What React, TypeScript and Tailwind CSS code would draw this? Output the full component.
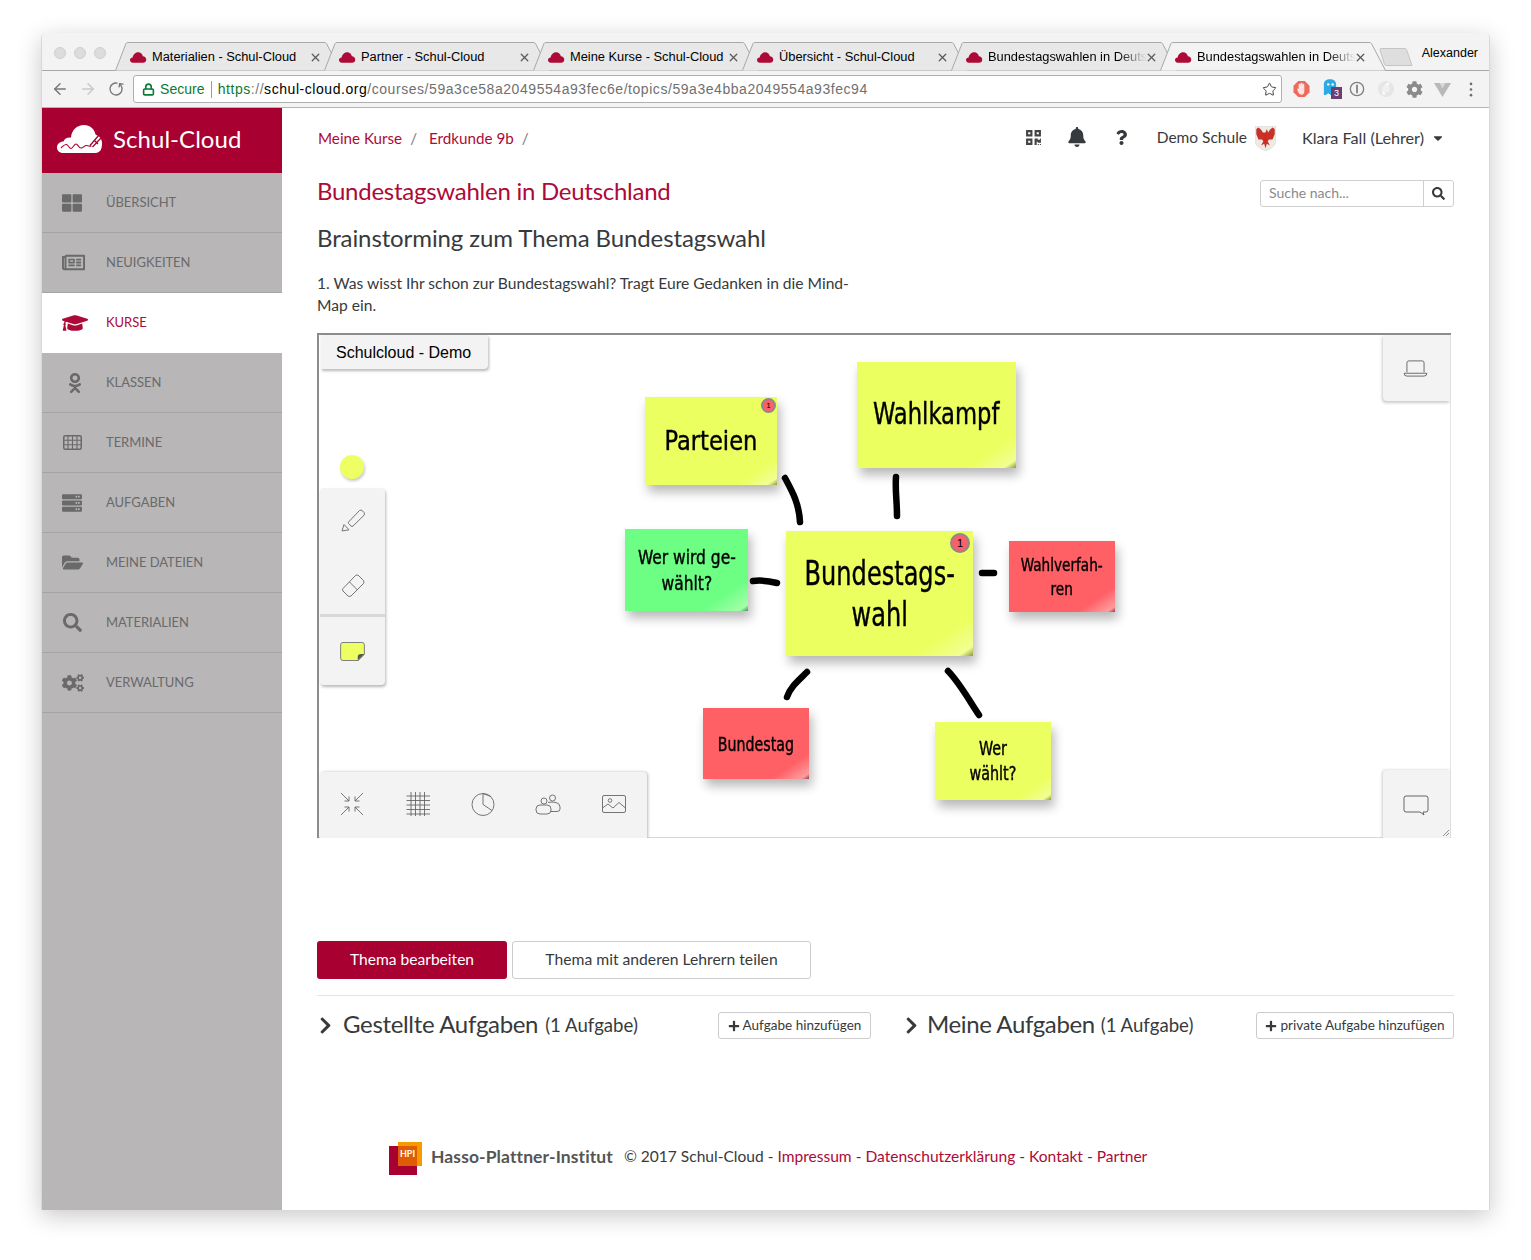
import React from "react";
import { ArrowLeft, ArrowRight, RotateCw, Lock, Star, X } from "lucide-react";
import {
  FaThLarge, FaRegNewspaper, FaGraduationCap, FaOdnoklassniki, FaServer,
  FaFolderOpen, FaSearch, FaCogs, FaBell, FaQuestion, FaQrcode, FaCaretDown, FaPlus, FaChevronRight, FaCog,
} from "react-icons/fa";

const TabCloud = () => (
  <svg viewBox="0 0 18 12" className="w-[17px] h-[12px] shrink-0">
    <path d="M3 12C1 12 0 10.600 0 9.200 0 7.600 1.200 6.400 2.800 6.400 3.200 3.800 5.400 1 8.600 1c2.800 0 4.600 2 5 4.200 2 .2 3.600 1.600 3.600 3.600 0 1.800-1.400 3.200-3.400 3.200z" fill="#ad0a37" />
  </svg>
);

function Tab({ title, active, fade }: { title: string; active?: boolean; fade?: boolean }) {
  return (
    <div className="relative h-[29px] w-[226px] -mr-[17px] shrink-0" style={{ zIndex: active ? 5 : 1 }}>
      <svg viewBox="0 0 226 29" className="absolute inset-0 w-full h-full">
        <path d="M0.500 28.500 L11 1.500 Q11.500 .5 13 .5 L209 .5 Q211 .5 211.500 1.500 L225.500 28.500" fill={active ? "#f3f3f3" : "#e8e8e8"} stroke="#a8a8a8" />
      </svg>
      <div className="absolute left-[15px] top-[8px] flex items-center h-[14px]">
        <TabCloud />
        <span className={`ml-[5px] whitespace-nowrap text-[12.850px] leading-[14px] text-black ${fade ? "[mask-image:linear-gradient(90deg,#000_82%,transparent_100%)]" : ""}`}>{title}</span>
      </div>
      <X size={13} strokeWidth={2.4} className="absolute left-[194px] top-[9px] text-[#5a5a5a]" />
    </div>
  );
}

const TableIcon = ({ className }: { className?: string }) => (
  <svg viewBox="0 0 19 15" className={className} width="19" height="15">
    <rect x=".75" y=".75" width="17.500" height="13.500" rx="1.500" fill="none" stroke="#6a6a6a" strokeWidth="1.500" />
    <path d="M0 5.200H19M0 9.700H19M5 1V14M9.500 1V14M14 1V14" stroke="#6a6a6a" strokeWidth="1.100" />
  </svg>
);

const nav: [string, React.ComponentType<{ className?: string }>, string][] = [
  ["ÜBERSICHT", FaThLarge, "text-[20px]"],
  ["NEUIGKEITEN", FaRegNewspaper, "text-[23px]"],
  ["KURSE", FaGraduationCap, "text-[26px]"],
  ["KLASSEN", FaOdnoklassniki, "text-[20px] ml-[3px]"],
  ["TERMINE", TableIcon, "text-[20px] ml-[1px]"],
  ["AUFGABEN", FaServer, "text-[20px]"],
  ["MEINE DATEIEN", FaFolderOpen, "text-[21px]"],
  ["MATERIALIEN", FaSearch, "text-[19px] ml-[1px]"],
  ["VERWALTUNG", FaCogs, "text-[22px]"],
];

function Sidebar() {
  return (
    <aside className="w-[240px] shrink-0 bg-[#b8b6b7]">
      <div className="h-[65px] bg-[#a80031] flex items-center pl-[15px]">
        <svg viewBox="0 0 46 30" className="w-[46px] h-[30px] mb-[3px]">
          <path d="M6 29C2.500 29 0 26.500 0 23.500 0 20 3 17.500 6.500 17.500 7.500 14.500 10.500 13 14 13.500 14.500 6 20 1 27 1 33 1 37.500 5 38.500 10.500 42.500 12 45 15 45 19 45 22 45 29 38 29z" fill="#fff" />
          <path d="M4 24c2.500-2.500 3.500-4 5.500-3.500S12 24.500 14 24.500s3-4.500 5-4.500 2.500 4 5 4 3.500-3 5.500-2.500 3 1 5 .5" fill="none" stroke="#a80031" strokeWidth="1.100" />
          <path d="M33 21.500 L42 11 M35.500 23 L44 14 M37 16 L41 20" fill="none" stroke="#a80031" strokeWidth="1.300" />
        </svg>
        <span className="ml-[10px] mb-[4px] text-[24px] leading-none text-white tracking-[0.05px] font-['Lato',sans-serif]">Schul-Cloud</span>
      </div>
      {nav.map(([label, Icon, size]) => {
        const active = label === "KURSE";
        return (
          <div key={label} className={`h-[60px] flex items-center pl-[20px] ${active ? "bg-white text-[#ad0a37] border-b border-white" : "text-[#6a6a6a] border-b border-[#a6a5a5]"} `}>
            <div className="w-[44px]">
              <span className={`block ${size} leading-none`}><Icon /></span>
            </div>
            <span className="text-[13px] tracking-[-0.05px]">{label}</span>
          </div>
        );
      })}
    </aside>
  );
}

type NoteProps = { cls: string; children: React.ReactNode; text: string; squeeze: string; badge?: string; badgeCls?: string };
function Note({ cls, children, text, squeeze, badge, badgeCls }: NoteProps) {
  return (
    <div className={`absolute flex items-center justify-center text-center text-black shadow-[3px_7px_10px_rgba(0,0,0,0.28)] font-['DejaVu_Sans_Condensed','DejaVu_Sans',sans-serif] ${cls} ${text}`}>
      <div className={`whitespace-nowrap [-webkit-text-stroke:0.4px_#000] ${squeeze}`}>{children}</div>
      {badge && <span className={`absolute flex items-center justify-center rounded-full bg-[#f8606a] border-2 border-[#8a8a8a] font-['Liberation_Sans',sans-serif] text-black ${badgeCls}`}>{badge}</span>}
    </div>
  );
}

const yellow = "bg-[linear-gradient(146deg,#ecff60_84%,#f1ff92_96%,#8f943e_100%)]";
const green = "bg-[linear-gradient(146deg,#6cff84_80%,#a2ffa8_96%,#3f8f55_100%)]";
const red = "bg-[linear-gradient(146deg,#ff6066_82%,#ff9b9c_96%,#8f3a40_100%)]";

function IconStroke({ children, className }: { children: React.ReactNode; className: string }) {
  return (
    <svg viewBox="0 0 28 28" fill="none" stroke="#666" strokeWidth="0.900" className={className}>
      {children}
    </svg>
  );
}

function Board() {
  return (
    <div className="relative h-[505px] w-[1134px] mt-[17px] border-l-2 border-t-2 border-[#8c8c8c] bg-white overflow-hidden shadow-[inset_0_-1px_0_#d8d8d8,inset_-1px_0_0_#e4e4e4] font-['Liberation_Sans',sans-serif]">
      {/* board name */}
      <div className="absolute left-[2px] top-0 h-[34px] w-[167px] rounded-br-[4px] bg-[#f3f3f3] shadow-[1px_2px_3px_rgba(0,0,0,0.28)] text-[16px] leading-[36px] pl-[15px] text-black">Schulcloud - Demo</div>

      {/* colour dot */}
      <div className="absolute left-[21px] top-[120px] w-[24px] h-[24px] rounded-full bg-[#edff62] shadow-[1px_2px_3px_rgba(0,0,0,0.22)]" />

      {/* left toolbar */}
      <div className="absolute left-[1px] top-[153px] w-[65px] h-[197px] rounded-[4px] bg-[#f3f3f3] shadow-[1px_2px_3px_rgba(0,0,0,0.28)] flex flex-col">
        <div className="h-[129px] border-b-[3px] border-[#d8d8d8] flex flex-col items-center pt-[17px] gap-[38px]">
          <IconStroke className="w-[28px] h-[28px]">
            <path d="M9.500 17 L20.500 5.500 Q22 4.500 23.500 5.800 L25 7.500 Q26 9 25 10.300 L14 21 Q13 22 12 21 L9.500 18.500 Q9 17.800 9.500 17Z M3 26 L5 19.500 L10 24.800Z" />
          </IconStroke>
          <IconStroke className="w-[28px] h-[28px]">
            <path d="M4 17.500 L16.500 4.500 Q18 3.500 19.500 4.500 L24.500 9.500 Q25.500 11 24.500 12.500 L12 25 Q10.500 26 9 25 L4 20 Q3 18.800 4 17.500Z M10.500 11 L18.500 19" />
          </IconStroke>
        </div>
        <div className="flex-1 flex justify-center pt-[25px]">
          <svg viewBox="0 0 26 20" className="w-[25px] h-[19px]">
            <path d="M3 .5 H23 Q25.500 .5 25.500 3 V13 L19 19.500 H3 Q.5 19.500 .5 17 V3 Q.5 .5 3 .5Z" fill="#edff62" stroke="#777" />
            <path d="M25.500 12.500 L18.500 19.500 V16 Q18.500 12.500 22 12.500Z" fill="#555" />
          </svg>
        </div>
      </div>

      {/* bottom toolbar */}
      <div className="absolute left-[1px] bottom-0 w-[327px] h-[66px] rounded-t-[4px] bg-[#f3f3f3] shadow-[1px_0_3px_rgba(0,0,0,0.28)] flex items-center justify-between pl-[18px] pr-[19px]">
        <IconStroke className="w-[28px] h-[28px] -mt-[2px]">
          <path d="M3 3 L11 11 M11 6.500 V11 H6.500 M25 3 L17 11 M17 6.500 V11 H21.500 M3 25 L11 17 M11 21.500 V17 H6.500 M25 25 L17 17 M17 21.500 V17 H21.500" />
        </IconStroke>
        <IconStroke className="w-[28px] h-[28px] -mt-[2px]">
          <path d="M7 2 V26 M11.500 2 V26 M16 2 V26 M20.500 2 V26 M2.500 6 H26 M2.500 10.500 H26 M2.500 15 H26 M2.500 19.500 H26 M2.500 24 H26" />
        </IconStroke>
        <IconStroke className="w-[28px] h-[28px] -mt-[2px] -ml-[1px]">
          <circle cx="14" cy="14.500" r="11" />
          <path d="M14 3.500 V14.500 L23 20.500 M14 3.500 L22 6.500" />
        </IconStroke>
        <IconStroke className="w-[28px] h-[28px] -mt-[2px]">
          <circle cx="10" cy="11" r="3" />
          <circle cx="18.500" cy="8" r="3" />
          <rect x="2" y="15" width="15" height="9" rx="4" />
          <path d="M14 12.500 Q18 11.500 22 12.500 Q26 13.500 26 17 V19 Q26 21.500 23 21.500 H17" />
        </IconStroke>
        <IconStroke className="w-[28px] h-[28px] -mt-[2px]">
          <rect x="2.500" y="5.500" width="23" height="17" rx="1.500" />
          <circle cx="10" cy="10.500" r="1.800" />
          <path d="M2.500 18 L8 14 L13 18 L19 12.500 L25.500 18" />
        </IconStroke>
      </div>

      {/* right toolbars */}
      <div className="absolute right-[1px] top-0 w-[67px] h-[66px] rounded-bl-[4px] bg-[#f3f3f3] shadow-[-1px_2px_3px_rgba(0,0,0,0.2)] flex items-center justify-center">
        <svg viewBox="0 0 26 20" fill="none" stroke="#666" className="w-[25px] h-[19px] -ml-[2px] mt-[1px]">
          <path d="M4 14 V4 Q4 2 6 2 H20 Q22 2 22 4 V14 M1 15 H25 Q25 18 22 18 H4 Q1 18 1 15Z" />
        </svg>
      </div>
      <div className="absolute right-[1px] bottom-0 w-[67px] h-[68px] rounded-tl-[4px] bg-[#f3f3f3] shadow-[-1px_0_3px_rgba(0,0,0,0.2)] flex items-center justify-center">
        <svg viewBox="0 0 26 22" fill="none" stroke="#666" className="w-[26px] h-[22px] -ml-[2px] mt-[2px]">
          <path d="M3 2 H23 Q25 2 25 4 V16 Q25 18 23 18 H20 L21 21 L17 18 H3 Q1 18 1 16 V4 Q1 2 3 2Z" />
        </svg>
      </div>
      <svg viewBox="0 0 8 8" className="absolute right-[1px] bottom-[1px] w-[8px] h-[8px]" stroke="#777" strokeWidth="0.800">
        <path d="M1 7 L7 1 M4 7 L7 4" />
      </svg>

      {/* strokes */}
      <svg className="absolute inset-0 w-full h-full pointer-events-none" fill="none" stroke="#000" strokeWidth="6.500" strokeLinecap="round" strokeLinejoin="round">
        <path d="M466 143 C473 156 480 168 481 187" />
        <path d="M577 142 C576 155 578 166 578 181" />
        <path d="M434 246 C442 245 450 246 458 248" />
        <path d="M663 238 H675" />
        <path d="M488 337 C480 345 472 351 468 362" />
        <path d="M629 336 C640 347 650 365 660 380" />
      </svg>

      {/* notes */}
      <Note cls={`left-[326px] top-[62px] w-[132px] h-[88px] ${yellow}`} text="text-[27px] leading-[32px]" squeeze="scale-x-[0.93]" badge="1" badgeCls="right-[1px] top-[1px] w-[15px] h-[15px] text-[8px]">Parteien</Note>
      <Note cls={`left-[538px] top-[27px] w-[159px] h-[106px] pb-[2px] ${yellow}`} text="text-[30px] leading-[34px]" squeeze="scale-x-[0.84]">Wahlkampf</Note>
      <Note cls={`left-[306px] top-[194px] w-[123px] h-[82px] ${green}`} text="text-[20px] leading-[26px]" squeeze="scale-x-[0.86]">Wer wird ge-<br />wählt?</Note>
      <Note cls={`left-[467px] top-[196px] w-[187px] h-[125px] ${yellow}`} text="text-[33px] leading-[41px]" squeeze="scale-x-[0.81]" badge="1" badgeCls="right-[3px] top-[2px] w-[20px] h-[20px] text-[11px]">Bundestags-<br />wahl</Note>
      <Note cls={`left-[690px] top-[206px] w-[106px] h-[71px] ${red}`} text="text-[18px] leading-[24px]" squeeze="scale-x-[0.84]">Wahlverfah-<br />ren</Note>
      <Note cls={`left-[384px] top-[373px] w-[106px] h-[71px] ${red}`} text="text-[19px] leading-[24px]" squeeze="scale-x-[0.83]">Bundestag</Note>
      <Note cls={`left-[616px] top-[387px] w-[116px] h-[78px] ${yellow}`} text="text-[19px] leading-[25px]" squeeze="scale-x-[0.84]">Wer<br />wählt?</Note>
    </div>
  );
}

function Content() {
  return (
    <main className="flex-1 min-w-0 pl-[35px] pr-[35px] text-[#373a3c] font-['Lato',sans-serif]">
      {/* top bar */}
      <div className="h-[62px] flex items-start justify-between text-[15.200px]">
        <div className="pt-[19px] leading-[22px] text-[#ad0a37] flex items-center">
          <span className="ml-[1px]">Meine Kurse</span><span className="text-[#7a7a7a] mx-[8px]">/</span>
          <span className="ml-[4px]">Erdkunde 9b</span><span className="text-[#7a7a7a] ml-[8px]">/</span>
        </div>
        <div className="flex items-center h-[60px] pr-[9px]">
          <FaQrcode className="text-[17px] text-[#444] mb-[2px]" />
          <FaBell className="text-[20px] text-[#373a3c] ml-[25px] mb-[2px]" />
          <FaQuestion className="text-[15px] text-[#373a3c] ml-[27px] mb-[2px]" />
          <span className="ml-[28px] mb-[1px] text-[15.500px]">Demo Schule</span>
          <svg viewBox="0 0 24 28" className="w-[21px] h-[25px] ml-[8px]">
            <path d="M0 0 H24 V16 C24 23 17 26 12 28 C7 26 0 23 0 16Z" fill="#ecebe4" stroke="#cdcbc0" strokeWidth=".5" />
            <path d="M12 7 L13.500 3 L15 7 L17 4 L20 1.500 L22.500 3 L22.500 9 L20 15 L16 15 L14.500 17 L17 22 L13.500 20 L12 25 L10.500 20 L7 22 L9.500 17 L8 15 L4 15 L1.500 9 L1.500 3 L4 1.500 L7 4 L9 7Z" fill="#c93027" />
            <path d="M12 8 L10.500 15 L12 19 L13.500 15Z" fill="#e1201c" />
          </svg>
          <span className="ml-[26px] text-[16.200px]">Klara Fall (Lehrer)</span>
          <FaCaretDown className="ml-[7px] text-[14px] text-[#373a3c]" />
        </div>
      </div>

      {/* title row */}
      <div className="flex items-start justify-between mt-[9px]">
        <h1 className="text-[24px] leading-[24px] tracking-[-0.26px] text-[#ad0a37]">Bundestagswahlen in Deutschland</h1>
        <div className="flex h-[27px] w-[194px] mt-[1px] border border-[#cfcfcf] rounded-[3px] text-[14px]">
          <span className="flex-1 pl-[8px] leading-[24px] text-[#8a8a8a]">Suche nach...</span>
          <span className="w-[30px] border-l border-[#cfcfcf] flex items-center justify-center text-[#373a3c]"><FaSearch className="text-[13px]" /></span>
        </div>
      </div>

      <h2 className="mt-[18px] text-[24px] leading-[26px] tracking-[-0.1px]">Brainstorming zum Thema Bundestagswahl</h2>
      <p className="mt-[21px] text-[15.600px] leading-[22px]">1. Was wisst Ihr schon zur Bundestagswahl? Tragt Eure Gedanken in die Mind-<br />Map ein.</p>

      <Board />

      {/* buttons */}
      <div className="mt-[103px] flex gap-[5px]">
        <div className="w-[190px] h-[38px] pb-[1px] rounded-[3px] bg-[#a80031] text-white text-[15.600px] flex items-center justify-center">Thema bearbeiten</div>
        <div className="w-[299px] h-[38px] pb-[1px] rounded-[3px] border border-[#cccccc] text-[15.700px] flex items-center justify-center">Thema mit anderen Lehrern teilen</div>
      </div>
      <div className="mt-[16px] border-t border-[#e3e3e3]" />

      {/* tasks */}
      <div className="mt-[16px] flex items-center h-[27px]">
        <div className="w-[554px] flex items-center">
          <FaChevronRight className="text-[19px] text-[#373a3c] -ml-[1px]" />
          <span className="ml-[8px] text-[24px] leading-[27px] tracking-[-0.33px] mb-[4px]">Gestellte Aufgaben</span>
          <span className="ml-[7px] text-[18.600px] leading-[27px]">(1 Aufgabe)</span>
          <div className="ml-auto w-[153px] h-[27px] border border-[#cccccc] rounded-[3px] flex items-center justify-center text-[13.500px]"><FaPlus className="text-[12px] mr-[3px]" />Aufgabe hinzufügen</div>
        </div>
        <div className="flex-1 flex items-center ml-[32px]">
          <FaChevronRight className="text-[19px] text-[#373a3c] -ml-[1px]" />
          <span className="ml-[6px] text-[24px] leading-[27px] tracking-[-0.4px] mb-[4px]">Meine Aufgaben</span>
          <span className="ml-[6px] text-[18.600px] leading-[27px]">(1 Aufgabe)</span>
          <div className="ml-auto w-[198px] h-[27px] border border-[#cccccc] rounded-[3px] flex items-center justify-center text-[13.600px]"><FaPlus className="text-[12px] mr-[3px]" />private Aufgabe hinzufügen</div>
        </div>
      </div>

      {/* footer */}
      <div className="mt-[103px] ml-[72px] flex items-center h-[33px]">
        <div className="relative w-[33px] h-[33px] shrink-0">
          <div className="absolute left-0 top-[4px] w-[28px] h-[29px] bg-[#a80031]" />
          <div className="absolute left-[9px] top-0 w-[24px] h-[24px] bg-[#f59b00]" />
          <div className="absolute left-[9px] top-[4px] w-[19px] h-[20px] bg-[#dd5c05] text-white text-[9px] leading-[15px] text-center font-bold">HPI</div>
        </div>
        <span className="ml-[9px] text-[17.500px] mb-[2px] font-bold text-[#555] tracking-[0.1px]">Hasso-Plattner-Institut</span>
        <span className="ml-[11px] mb-[3px] text-[15.550px]">© 2017 Schul-Cloud - <span className="text-[#ad0a37]">Impressum</span> - <span className="text-[#ad0a37]">Datenschutzerklärung</span> - <span className="text-[#ad0a37]">Kontakt</span> - <span className="text-[#ad0a37]">Partner</span></span>
      </div>
    </main>
  );
}

function ChromeBar() {
  const tabs: [string, boolean?, boolean?][] = [
    ["Materialien - Schul-Cloud"],
    ["Partner - Schul-Cloud"],
    ["Meine Kurse - Schul-Cloud"],
    ["Übersicht - Schul-Cloud"],
    ["Bundestagswahlen in Deuts", false, true],
    ["Bundestagswahlen in Deuts", true, true],
  ];
  return (
    <div className="font-['Liberation_Sans',sans-serif]">
      <div className="relative h-[38px] bg-[#f3f3f3] rounded-t-[5px] border-b border-[#a8a8a8] flex items-end">
        <div className="flex gap-[8px] self-start mt-[14px] ml-[12px]">
          <span className="w-[12px] h-[12px] rounded-full bg-[#dcdcdc] border border-[#cfcfcf]" />
          <span className="w-[12px] h-[12px] rounded-full bg-[#dcdcdc] border border-[#cfcfcf]" />
          <span className="w-[12px] h-[12px] rounded-full bg-[#dcdcdc] border border-[#cfcfcf]" />
        </div>
        <div className="flex ml-[9px] -mb-px">
          {tabs.map(([t, a, f], i) => <Tab key={i} title={t} active={a} fade={f} />)}
        </div>
        <svg viewBox="0 0 34 18" className="absolute left-[1337px] top-[15px] w-[34px] h-[18px]">
          <path d="M1 1.500 Q1 .5 2 .5 H26 Q27 .5 27.500 1.500 L33 17.500 H7Q6 17.500 5.500 16.500Z" fill="#dedede" stroke="#c4c4c4" />
        </svg>
        <span className="absolute right-[11px] top-[13px] text-[12.500px] leading-[15px] text-black">Alexander</span>
      </div>
      <div className="h-[37px] bg-[#f3f3f3] border-b border-[#b5b5b5] flex items-center pl-[9px]">
        <ArrowLeft size={18} strokeWidth={2} className="text-[#787878]" />
        <ArrowRight size={18} strokeWidth={2} className="text-[#c9c9c9] ml-[10px]" />
        <RotateCw size={16} strokeWidth={2} className="text-[#787878] ml-[11px] -scale-x-100 rotate-[100deg]" />
        <div className="ml-[9px] w-[1149px] h-[28px] bg-white border border-[#b0b0b0] rounded-[3px] flex items-center pl-[8px] pr-[4px] text-[14px] shrink-0">
          <Lock size={13} strokeWidth={3} className="text-[#0b7a34]" />
          <span className="ml-[5px] text-[#0b7a34] tracking-[0.05px]">Secure</span>
          <span className="mx-[6px] w-px h-[17px] bg-[#9a9a9a]" />
          <span className="whitespace-nowrap tracking-[0.55px]"><span className="text-[#0b7a34]">https</span><span className="text-[#777]">://</span><span className="text-black">schul-cloud.org</span><span className="text-[#707070]">/courses/59a3ce58a2049554a93fec6e/topics/59a3e4bba2049554a93fec94</span></span>
          <Star size={15} strokeWidth={1.600} className="ml-auto text-[#444]" />
        </div>
        <div className="ml-[11px] flex items-center">
          {/* red stop hand */}
          <svg viewBox="0 0 18 18" className="w-[17px] h-[18px]">
            <path d="M5.500 .5H12.500L17.500 5.500V12.500L12.500 17.500H5.500L.5 12.500V5.500Z" fill="#ef6a5e" />
            <path d="M6 8V4.500Q6 3.500 7 3.500T8 4.500V3.500Q8 2.500 9 2.500T10 3.500V4.500Q10 3.500 11 3.500T12 4.500V11Q12 15 9 15 6.500 15 5.500 12.500L4.500 9.500Q4.500 8.500 5.300 8.500T6 9.500Z" fill="#fbe4e0" />
          </svg>
          <span className="relative block w-[20px] h-[22px] ml-[13px]">
            <svg viewBox="0 0 16 20" className="absolute left-0 top-0 w-[14px] h-[18px]"><path d="M1 19 V7 C1 3 4 1 8 1 S15 3 15 7 V19 L12 17 L9 19 L6 17 L3 19Z" fill="#2da9e4" /><circle cx="6" cy="7" r="1.400" fill="#fff" /><circle cx="11" cy="7" r="1.400" fill="#fff" /></svg>
            <span className="absolute left-[8px] top-[9px] w-[11px] h-[12px] bg-[#6b3f73] text-white text-[9px] leading-[12px] text-center">3</span>
          </span>
          <svg viewBox="0 0 18 18" className="w-[16px] h-[16px] ml-[6px]"><circle cx="9" cy="9" r="7.500" fill="none" stroke="#808080" strokeWidth="1.500" /><rect x="8" y="4" width="2" height="10" rx="1" fill="#808080" /></svg>
          <svg viewBox="0 0 18 18" className="w-[18px] h-[18px] ml-[12px]"><circle cx="9" cy="9" r="8" fill="#e6e6e6" /><path d="M12 3 Q5 8 7 15" fill="none" stroke="#fafafa" strokeWidth="2.500" /><circle cx="9" cy="9" r="3.500" fill="#f0f0f0" /></svg>
          <FaCog className="text-[17px] text-[#8a8a8a] ml-[11px]" />
          <svg viewBox="0 0 18 18" className="w-[17px] h-[17px] ml-[11px]"><path d="M0 2 H18 L9 17Z" fill="#b9b9b9" /><path d="M6 2 H12 L9 8Z" fill="#dadada" /></svg>
          <svg viewBox="0 0 4 16" className="w-[4px] h-[15px] ml-[18px]"><circle cx="2" cy="2" r="1.400" fill="#6f6f6f" /><circle cx="2" cy="8" r="1.400" fill="#6f6f6f" /><circle cx="2" cy="14" r="1.400" fill="#6f6f6f" /></svg>
        </div>
      </div>
    </div>
  );
}

export default function App() {
  return (
    <div className="min-h-[1260px] bg-white pt-[33px] pl-[41px] font-['Lato',sans-serif]">
      <div className="w-[1449px] h-[1177px] rounded-t-[5px] border-x border-[#d8d8d8] bg-white shadow-[0_6px_24px_rgba(0,0,0,0.22)] flex flex-col">
        <ChromeBar />
        <div className="flex flex-1 min-h-0">
          <Sidebar />
          <Content />
        </div>
      </div>
    </div>
  );
}
